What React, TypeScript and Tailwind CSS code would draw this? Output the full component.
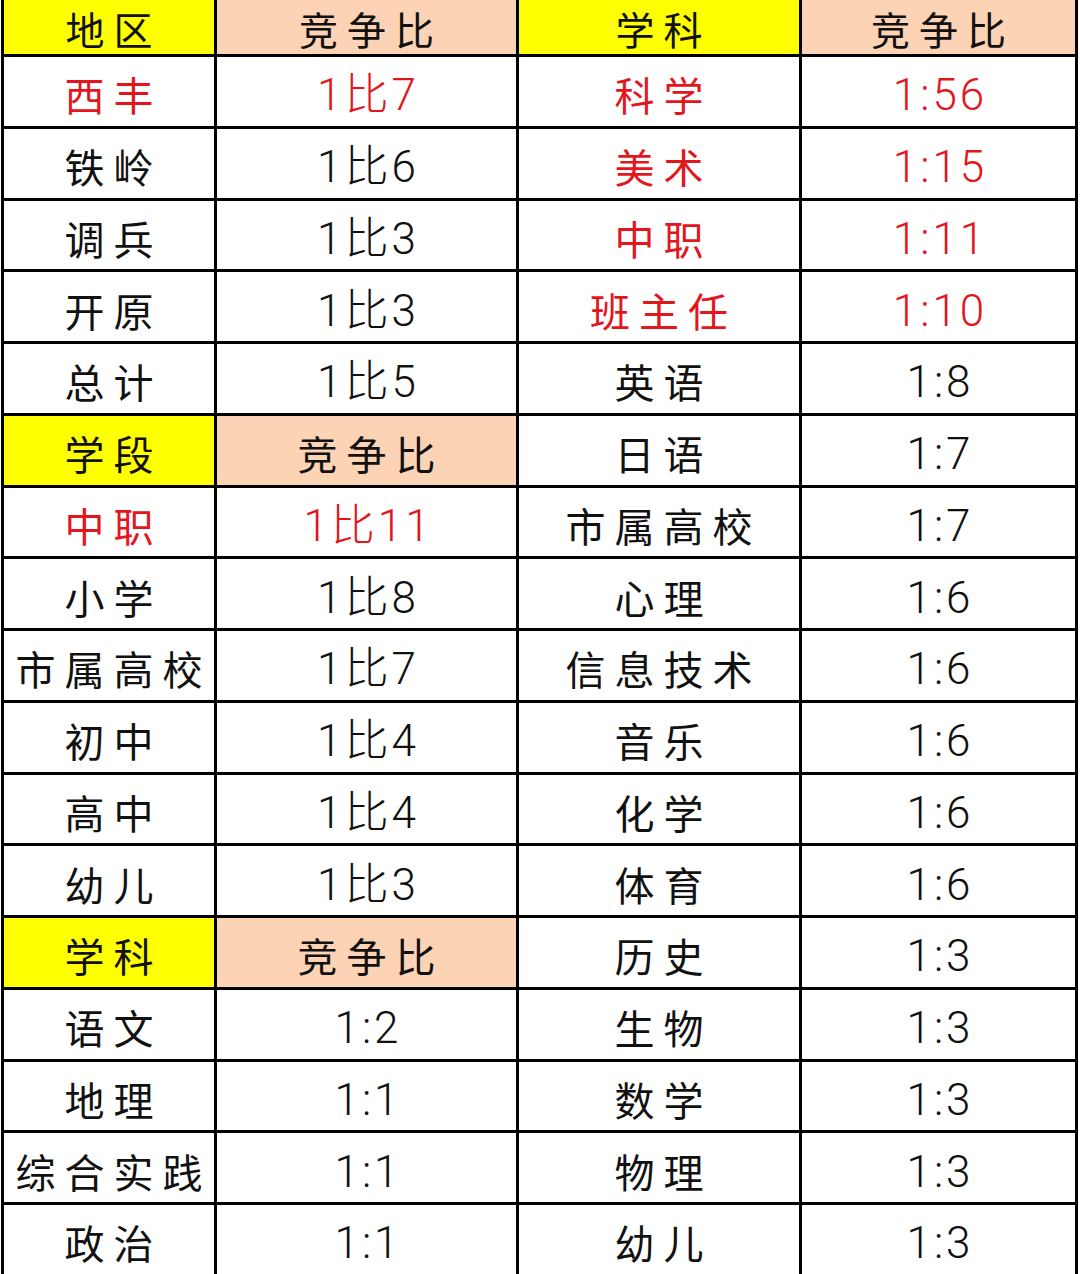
import React from 'react';

type Cell = {
  text: string;
  bg?: 'yellow' | 'peach';
  red?: boolean;
};

const Y = (text: string): Cell => ({ text, bg: 'yellow' });
const P = (text: string): Cell => ({ text, bg: 'peach' });
const R = (text: string): Cell => ({ text, red: true });
const N = (text: string): Cell => ({ text });

const rows: Cell[][] = [
  [Y('地区'), P('竞争比'), Y('学科'), P('竞争比')],
  [R('西丰'), R('1比7'), R('科学'), R('1:56')],
  [N('铁岭'), N('1比6'), R('美术'), R('1:15')],
  [N('调兵'), N('1比3'), R('中职'), R('1:11')],
  [N('开原'), N('1比3'), R('班主任'), R('1:10')],
  [N('总计'), N('1比5'), N('英语'), N('1:8')],
  [Y('学段'), P('竞争比'), N('日语'), N('1:7')],
  [R('中职'), R('1比11'), N('市属高校'), N('1:7')],
  [N('小学'), N('1比8'), N('心理'), N('1:6')],
  [N('市属高校'), N('1比7'), N('信息技术'), N('1:6')],
  [N('初中'), N('1比4'), N('音乐'), N('1:6')],
  [N('高中'), N('1比4'), N('化学'), N('1:6')],
  [N('幼儿'), N('1比3'), N('体育'), N('1:6')],
  [Y('学科'), P('竞争比'), N('历史'), N('1:3')],
  [N('语文'), N('1:2'), N('生物'), N('1:3')],
  [N('地理'), N('1:1'), N('数学'), N('1:3')],
  [N('综合实践'), N('1:1'), N('物理'), N('1:3')],
  [N('政治'), N('1:1'), N('幼儿'), N('1:3')],
];

const isNumeric = (s: string) => /^1/.test(s);

function TableCell({ cell, top }: { cell: Cell; top: boolean }) {
  const bg =
    cell.bg === 'yellow' ? 'bg-[#ffff00]' : cell.bg === 'peach' ? 'bg-[#fcd3b4]' : 'bg-white';
  const color = cell.red ? 'text-[#e3161d]' : 'text-[#111111]';
  const numeric = isNumeric(cell.text);

  return (
    <div className={`${bg} flex items-center justify-center`}>
      {numeric ? (
        <span
          className={`${color} text-[44px] leading-none font-light tracking-[3px] pl-[3px] pt-[8px] font-['Roboto','Noto_Sans_CJK_SC',sans-serif]`}
        >
          {cell.text}
        </span>
      ) : (
        <span
          className={`${color} ${
            top ? 'text-[39px] pt-[2px]' : 'text-[40px] pt-[6px]'
          } leading-none tracking-[9px] pl-[9px] font-['Noto_Sans_CJK_SC',sans-serif]`}
        >
          {cell.text}
        </span>
      )}
    </div>
  );
}

export default function App() {
  return (
    <div className="w-[1080px] h-[1274px] bg-white overflow-hidden">
      <div className="ml-[1px] w-[1077px] bg-black px-[3px] pb-[3px]">
        <div className="grid grid-cols-[210px_299px_280px_273px] grid-rows-[54px_repeat(17,68.75px)] gap-[3px]">
          {rows.map((row, ri) =>
            row.map((cell, ci) => <TableCell key={`${ri}-${ci}`} cell={cell} top={ri === 0} />)
          )}
        </div>
      </div>
    </div>
  );
}
